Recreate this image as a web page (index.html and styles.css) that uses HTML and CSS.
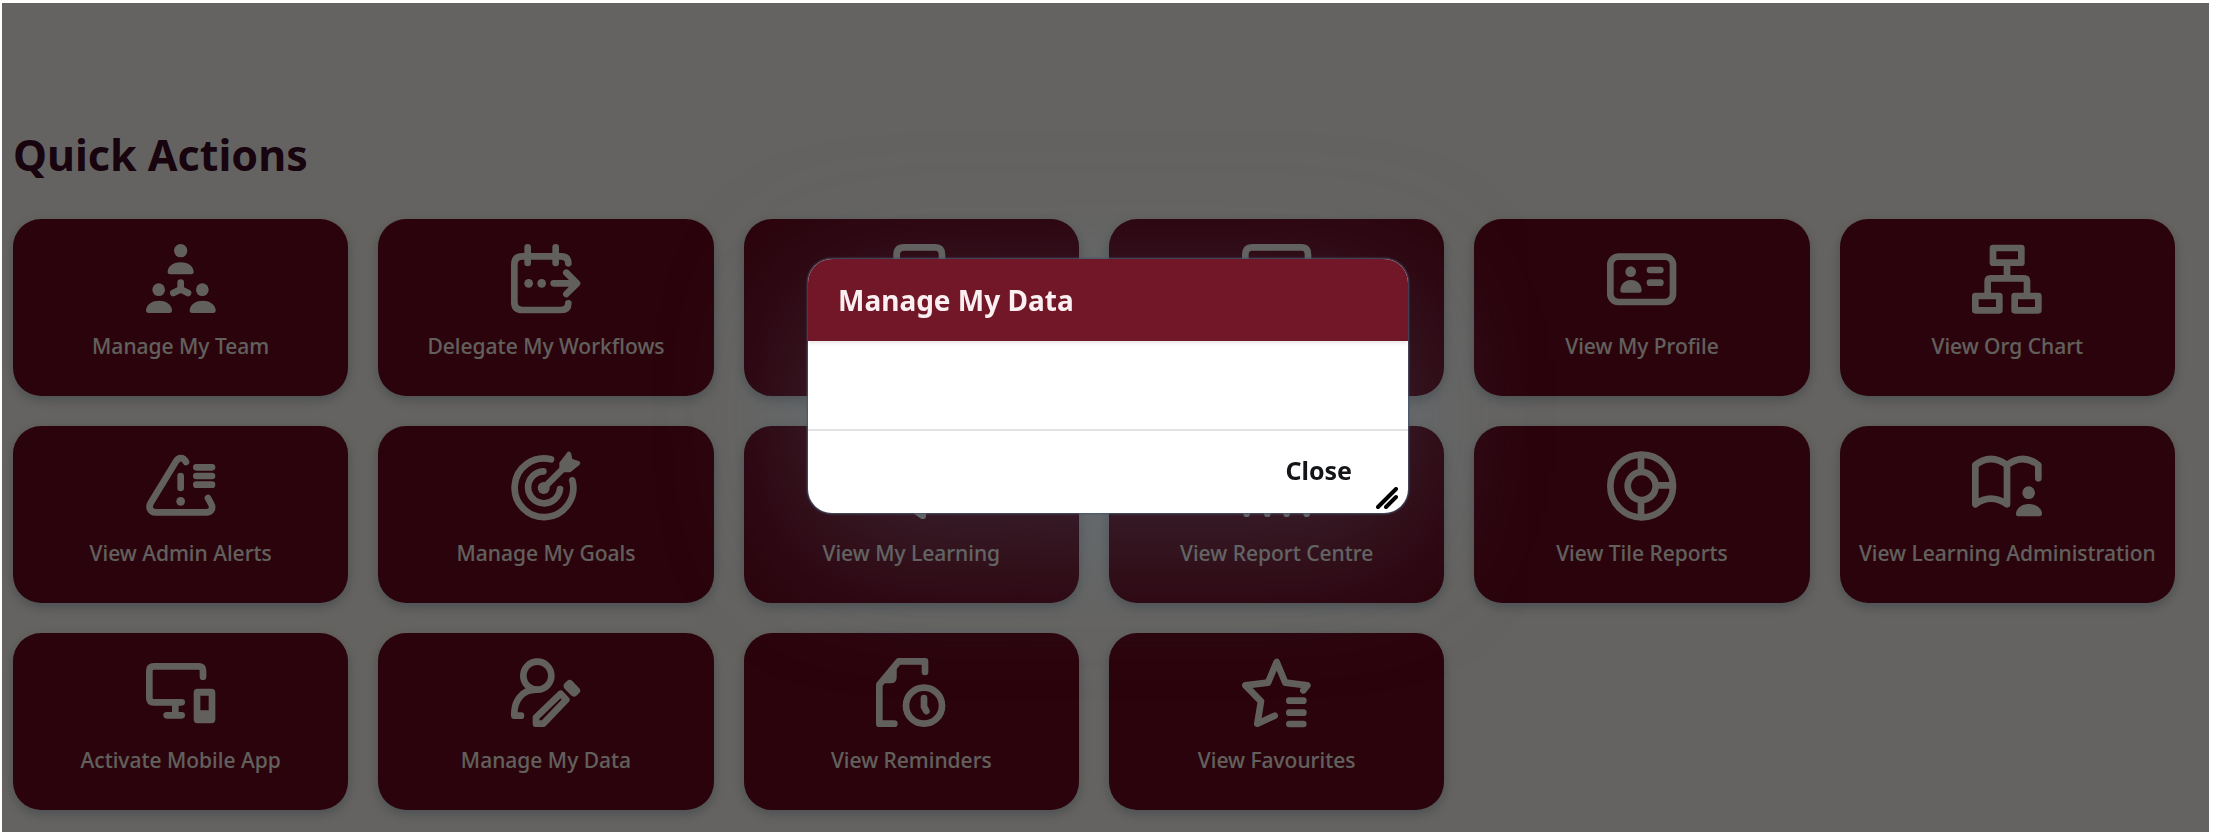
FILE: index.html
```html
<!DOCTYPE html>
<html lang="en">
<head>
  <meta charset="UTF-8">
  <meta name="viewport" content="width=device-width, initial-scale=1.0">
  <title>Quick Actions</title>
  <link rel="stylesheet" href="styles.css">
</head>
<body>
  <main class="page">
    <h1 class="page-title">Quick Actions</h1>

    <div class="tile-grid">
      <button class="tile">
        <svg class="icon" viewBox="0 0 210 210">
          <g class="solid">
            <circle cx="104" cy="20" r="20"/>
            <path d="M73 91Q64 91 65 82C67 64 85 55 104 55S141 64 143 82Q144 91 135 91Z"/>
            <circle cx="38" cy="137" r="19"/>
            <path d="M8 207Q-1 207 0 198C2 180 20 170 39 170S76 180 78 198Q79 207 70 207Z"/>
            <circle cx="169" cy="137" r="19"/>
            <path d="M139 207Q130 207 131 198C133 180 151 170 170 170S207 180 209 198Q210 207 201 207Z"/>
          </g>
          <path d="M104 116V136L82 147M104 136L126 147"/>
        </svg>
        <span>Manage My Team</span>
      </button>

      <button class="tile">
        <svg class="icon" viewBox="0 0 210 210">
          <path d="M172 58Q172 37 150 37H34Q10 37 10 62V174Q10 198 34 198H150Q172 198 172 178M50 10V57M134 10V57M128 118H196M166 86L198 118L166 150"/>
          <g class="solid">
            <circle cx="53" cy="118" r="13"/>
            <circle cx="92" cy="118" r="13"/>
          </g>
        </svg>
        <span>Delegate My Workflows</span>
      </button>

      <button class="tile">
        <svg class="icon" viewBox="0 0 210 210">
          <path d="M62 70V32Q62 10 84 10H178Q198 10 198 32V198H10V70Z"/>
        </svg>
      </button>

      <button class="tile">
        <svg class="icon" viewBox="0 0 210 210">
          <path d="M10 198V32Q10 10 30 10H180Q198 10 198 32V198Z"/>
        </svg>
      </button>

      <button class="tile">
        <svg class="icon" viewBox="0 0 210 210">
          <rect x="10" y="38" width="188" height="136" rx="24"/>
          <path d="M129 78H160M129 116H160"/>
          <g class="solid">
            <circle cx="71" cy="83" r="16"/>
            <path d="M48 146Q39 146 40 137C42 118 56 108 72 108S102 118 104 137Q105 146 96 146Z"/>
          </g>
        </svg>
        <span>View My Profile</span>
      </button>

      <button class="tile">
        <svg class="icon" viewBox="0 0 210 210">
          <path d="M63 12H148V56H63ZM105 58V103M47 152V112Q47 103 56 103H156Q165 103 165 112V152M10 156H82V199H10ZM128 156H199V199H128Z"/>
        </svg>
        <span>View Org Chart</span>
      </button>

      <button class="tile">
        <svg class="icon" viewBox="0 0 210 210">
          <path d="M120 33C112 17 97 19 90 31L14 156C6 170 14 184 28 184H180C198 184 202 170 195 158L186 141M151 49H198M151 75H198M151 101H198M104 75V111"/>
          <circle class="solid" cx="104" cy="151" r="13"/>
        </svg>
        <span>View Admin Alerts</span>
      </button>

      <button class="tile">
        <svg class="icon" viewBox="0 0 210 210">
          <path d="M120 25A88 88 0 1 0 184 88M97 61A48 48 0 1 0 147 114M98 111L158 51"/>
          <g class="solid">
            <circle cx="98" cy="111" r="18"/>
            <path d="M145 64V35L168 5Q173 -2 180 6L184 24L203 30Q211 34 206 41L178 64Z"/>
          </g>
        </svg>
        <span>Manage My Goals</span>
      </button>

      <button class="tile">
        <svg class="icon" viewBox="0 0 210 210">
          <path d="M10 20H198V160H140V194L92 160H10Z"/>
        </svg>
        <span>View My Learning</span>
      </button>

      <button class="tile">
        <svg class="icon" viewBox="0 0 210 210">
          <path d="M14 110V188M76 70V188M134 90V188M194 30V188"/>
        </svg>
        <span>View Report Centre</span>
      </button>

      <button class="tile">
        <svg class="icon" viewBox="0 0 210 210">
          <circle cx="104" cy="105" r="94"/>
          <circle cx="104" cy="105" r="42"/>
          <path d="M102 12V62M102 148V198M148 103H196"/>
        </svg>
        <span>View Tile Reports</span>
      </button>

      <button class="tile">
        <svg class="icon" viewBox="0 0 210 210">
          <path d="M10 160V42Q56 6 105 42V160Q56 126 10 160ZM105 42Q154 6 199 42V82"/>
          <g class="solid">
            <circle cx="170" cy="125" r="19"/>
            <path d="M140 196Q131 196 132 187C134 169 152 159 171 159S208 169 210 187Q210 196 202 196Z"/>
          </g>
        </svg>
        <span>View Learning Administration</span>
      </button>

      <button class="tile">
        <svg class="icon" viewBox="0 0 210 210">
          <path d="M171 56V38Q171 25 158 25H24Q10 25 10 38V120Q10 133 24 133H107M88 133V172M62 172H107"/>
          <path class="solid" fill-rule="evenodd" d="M155 92H196Q208 92 208 104V184Q208 196 196 196H155Q143 196 143 184V104Q143 92 155 92ZM163 113V157H188V113Z"/>
        </svg>
        <span>Activate Mobile App</span>
      </button>

      <button class="tile">
        <svg class="icon" viewBox="0 0 210 210">
          <circle cx="79" cy="53" r="42"/>
          <path d="M30 173H10C8 130 32 95 75 95M75 178L149 107L166 125L97 197H75Z"/>
          <path class="solid" d="M168 69Q176 61 184 69L204 90Q212 98 204 106L196 113Q188 120 180 112L161 92Q154 84 161 76Z"/>
        </svg>
        <span>Manage My Data</span>
      </button>

      <button class="tile">
        <svg class="icon" viewBox="0 0 210 210">
          <path d="M147 42V10H68L10 80V197H55M144 120V146L151 159"/>
          <path class="solid" d="M62 10V58Q62 76 44 76H10Z"/>
          <circle cx="144" cy="143" r="54"/>
        </svg>
        <span>View Reminders</span>
      </button>

      <button class="tile">
        <svg class="icon" viewBox="0 0 210 210">
          <path d="M184 97L196 82L130 74L104 12L78 74L10 82L57 130L46 197L98 173M142 128H184M142 164H184M142 198H184"/>
        </svg>
        <span>View Favourites</span>
      </button>
    </div>
  </main>

  <div class="dialog-layer">
    <div class="dialog" role="dialog" aria-modal="true" aria-labelledby="dialogTitle">
      <header class="dialog-header">
        <h2 id="dialogTitle">Manage My Data</h2>
      </header>
      <div class="dialog-body"></div>
      <footer class="dialog-footer">
        <button class="close-btn">Close</button>
      </footer>
      <svg class="resize-handle" viewBox="0 0 22 22">
        <path d="M2 20L20 2M10 20L20 10"/>
      </svg>
    </div>
  </div>
</body>
</html>
```
FILE: styles.css
```css
:root {
  --page-bg: #fcf8f2;
  --title: #3c0a26;
  --tile-bg: #6c081e;
  --tile-text: #f6f1e8;
  --dialog-header: #711727;
}
* {
  box-sizing: border-box;
}
body {
  margin: 0;
  padding: 3px 7px 4px 2px;
  min-height: 100vh;
  display: flex;
  background: #fff;
  font-family: "Noto Sans", "Open Sans", sans-serif;
}
.page {
  position: relative;
  flex: 1;
  padding: 122px 34px 22px 11px;
  background: var(--page-bg);
}
/* dimmed backdrop over the page */
.page::after {
  content: "";
  position: absolute;
  inset: 0;
  background: rgba(0, 0, 0, 0.6);
}
.page-title {
  margin: 0 0 34px;
  font-size: 43px;
  line-height: 60px;
  font-weight: 700;
  color: var(--title);
}
.tile-grid {
  display: grid;
  grid-template-columns: repeat(6, 1fr);
  grid-auto-rows: minmax(177px, auto);
  gap: 30px;
}
.tile {
  display: flex;
  flex-direction: column;
  align-items: center;
  gap: 18px;
  padding: 25px 8px;
  border: none;
  border-radius: 28px;
  background: var(--tile-bg);
  color: var(--tile-text);
  font-family: inherit;
  font-size: 21px;
  font-weight: 500;
  line-height: 28px;
  box-shadow: 0 4px 12px rgba(90, 115, 140, 0.4);
  cursor: pointer;
}
.icon {
  width: 70px;
  height: 70px;
  fill: none;
  stroke: currentColor;
  stroke-width: 20;
  stroke-linecap: round;
  stroke-linejoin: round;
}
.icon .solid {
  fill: currentColor;
  stroke: none;
}
.dialog-layer {
  position: fixed;
  inset: 0;
  display: flex;
  align-items: center;
  justify-content: center;
  padding-bottom: 64px;
}
.dialog {
  position: relative;
  width: 600px;
  max-width: 90%;
  border-radius: 24px;
  background: #fff;
  box-shadow: 0 0 2px 1px #4a5870, 0 30px 140px 10px rgba(105, 130, 155, 0.26);
}
.dialog-header {
  padding: 20px 30px;
  border-radius: 24px 24px 0 0;
  background: var(--dialog-header);
  color: #fbeff1;
  box-shadow: 0 2px 4px rgba(0, 0, 0, 0.1);
}
.dialog-header h2 {
  margin: 0;
  font-size: 28px;
  line-height: 42px;
  font-weight: 700;
}
.dialog-body {
  min-height: 88px;
}
.dialog-footer {
  display: flex;
  justify-content: flex-end;
  padding: 18px 36px 22px;
  border-top: 2px solid #e2e2e2;
}
.close-btn {
  padding: 0 20px;
  border: none;
  background: none;
  color: #131518;
  font-family: inherit;
  font-size: 25px;
  line-height: 42px;
  font-weight: 700;
  cursor: pointer;
}
.resize-handle {
  position: absolute;
  right: 10px;
  bottom: 4px;
  width: 22px;
  height: 22px;
  fill: none;
  stroke: #000;
  stroke-width: 4;
  stroke-linecap: round;
}
```
